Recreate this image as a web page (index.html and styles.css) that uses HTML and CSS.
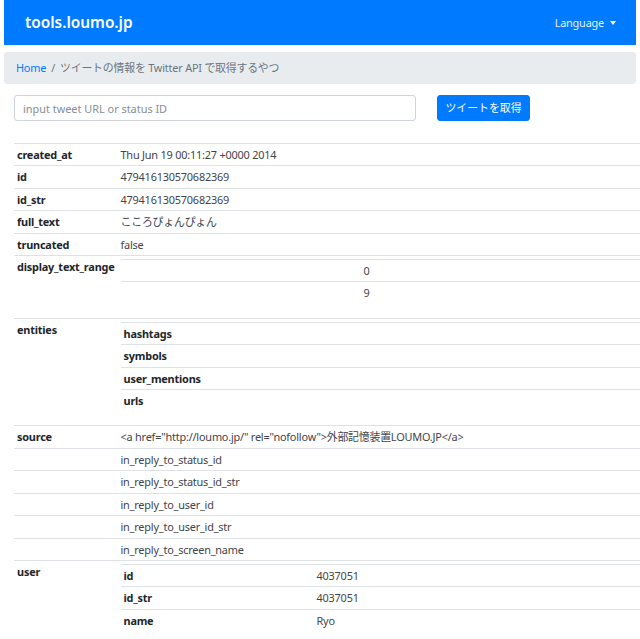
FILE: index.html
```html
<!DOCTYPE html>
<html lang="ja">
<head>
<meta charset="utf-8">
<title>tools.loumo.jp</title>
<link rel="stylesheet" href="styles.css">
</head>
<body>
<nav class="navbar">
  <span class="brand">tools.loumo.jp</span>
  <span class="lang">Language <span class="caret"></span></span>
</nav>
<div class="breadcrumb">
  <a class="crumb-link" href="#">Home</a>
  <span class="crumb-sep">/</span>
  <span class="crumb-current">ツイートの情報を Twitter API で取得するやつ</span>
</div>
<form class="search">
  <input class="search-input" type="text" placeholder="input tweet URL or status ID">
  <button class="search-btn" type="button">ツイートを取得</button>
</form>
<div class="result">
<table class="tbl outer">
  <tbody>
    <tr><th class="key">created_at</th><td>Thu Jun 19 00:11:27 +0000 2014</td></tr>
    <tr><th class="key">id</th><td>479416130570682369</td></tr>
    <tr><th class="key">id_str</th><td>479416130570682369</td></tr>
    <tr><th class="key">full_text</th><td>こころぴょんぴょん</td></tr>
    <tr><th class="key">truncated</th><td>false</td></tr>
    <tr><th class="key">display_text_range</th><td>
      <table class="tbl nested">
        <tbody>
          <tr><th class="idx"></th><td>0</td></tr>
          <tr><th class="idx"></th><td>9</td></tr>
        </tbody>
      </table>
    </td></tr>
    <tr><th class="key">entities</th><td>
      <table class="tbl nested">
        <tbody>
          <tr><th>hashtags</th><td></td></tr>
          <tr><th>symbols</th><td></td></tr>
          <tr><th>user_mentions</th><td></td></tr>
          <tr><th>urls</th><td></td></tr>
        </tbody>
      </table>
    </td></tr>
    <tr><th class="key">source</th><td>&lt;a href="http://loumo.jp/" rel="nofollow"&gt;外部記憶装置LOUMO.JP&lt;/a&gt;</td></tr>
    <tr><th class="key"></th><td>in_reply_to_status_id</td></tr>
    <tr><th class="key"></th><td>in_reply_to_status_id_str</td></tr>
    <tr><th class="key"></th><td>in_reply_to_user_id</td></tr>
    <tr><th class="key"></th><td>in_reply_to_user_id_str</td></tr>
    <tr><th class="key"></th><td>in_reply_to_screen_name</td></tr>
    <tr><th class="key">user</th><td>
      <table class="tbl nested">
        <tbody>
          <tr><th class="ukey">id</th><td>4037051</td></tr>
          <tr><th class="ukey">id_str</th><td>4037051</td></tr>
          <tr><th class="ukey">name</th><td>Ryo</td></tr>
        </tbody>
      </table>
    </td></tr>
  </tbody>
</table>
</div>
</body>
</html>
```
FILE: styles.css
```css
html, body {
  margin: 0;
  overflow: hidden;
}
body {
  padding: 0 4px;
  font-family: "Noto Sans", "Noto Sans CJK JP", sans-serif;
  font-size: 10.9px;
  line-height: 15.4px;
  letter-spacing: -0.2px;
  color: #212529;
  background: #fff;
}
.navbar {
  height: 45px;
  background: #007bff;
  display: flex;
  align-items: center;
  justify-content: space-between;
  padding: 0 20px 0 21px;
}
.brand {
  color: #fff;
  font-size: 15.4px;
  font-weight: 600;
  letter-spacing: 0;
}
.lang {
  color: rgba(255, 255, 255, 0.92);
  display: flex;
  align-items: center;
  gap: 6px;
}
.caret {
  width: 0;
  height: 0;
  border-top: 4px solid #fff;
  border-left: 3.5px solid transparent;
  border-right: 3.5px solid transparent;
}
.breadcrumb {
  margin-top: 7px;
  height: 32px;
  background: #e9ecef;
  border-radius: 3px;
  display: flex;
  align-items: center;
  padding: 0 12px;
}
.crumb-link {
  color: #007bff;
  text-decoration: none;
}
.crumb-sep {
  color: #6c757d;
  padding: 0 5px;
}
.crumb-current {
  color: #6c757d;
}
.search {
  margin: 11px 0 0;
  padding-left: 10px;
  display: flex;
  align-items: center;
}
.search-input {
  box-sizing: border-box;
  width: 402px;
  height: 26px;
  border: 1px solid #ced4da;
  border-radius: 3px;
  padding: 0 8px;
  font: inherit;
  color: #495057;
}
.search-input::placeholder {
  color: #868e96;
}
.search-btn {
  box-sizing: border-box;
  margin-left: 21px;
  width: 93px;
  height: 26px;
  border: 1px solid #007bff;
  border-radius: 3px;
  background: #007bff;
  color: #fff;
  font: inherit;
  padding: 0;
}
.result {
  margin: 22px -4px 0 10px;
}
.tbl {
  width: 100%;
  border-collapse: collapse;
}
.tbl th,
.tbl td {
  padding: 3px;
  border-top: 1px solid #dee2e6;
  vertical-align: top;
  text-align: left;
}
.tbl th {
  font-weight: 700;
  color: #212529;
}
.tbl td {
  color: #3f444a;
}
.key {
  width: 93px;
}
.tbl.nested {
  width: calc(100% + 3px);
  margin-bottom: 11px;
}
.idx {
  width: 234px;
}
.ukey {
  width: 187px;
}
```
